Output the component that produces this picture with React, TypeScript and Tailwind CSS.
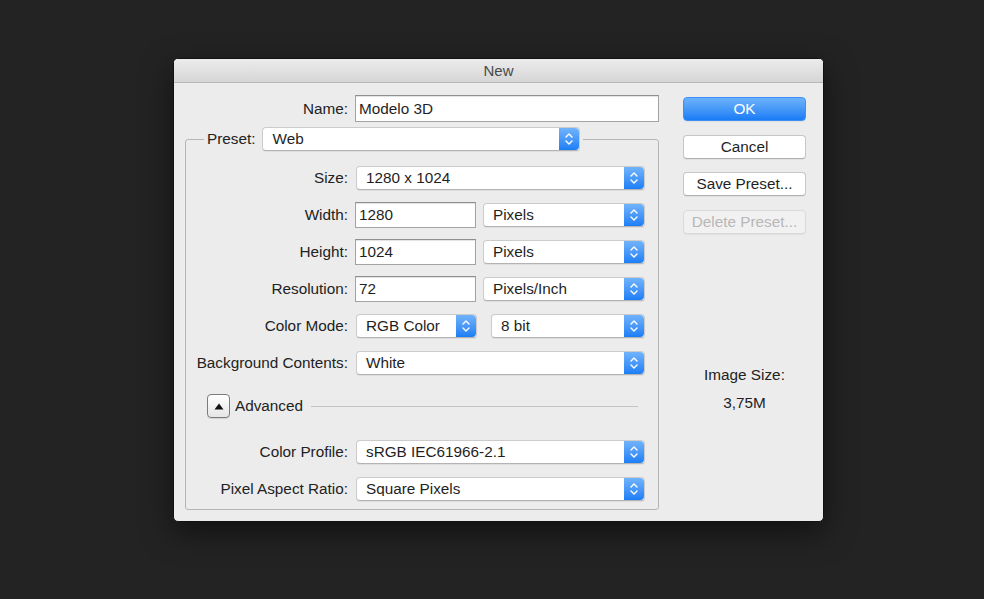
import React from "react";

const font = { fontFamily: '"Liberation Sans", Arial, sans-serif' };

function Stepper() {
  return (
    <div className="flex h-full w-[20px] flex-none flex-col items-center justify-center gap-[2px] rounded-r-[4px] bg-gradient-to-b from-[#70b3fa] to-[#1a7ef6]">
      <svg width="8" height="5" viewBox="0 0 8 5" fill="none">
        <path d="M1 4 L4 1 L7 4" stroke="white" strokeWidth="1.4" strokeLinecap="round" strokeLinejoin="round" />
      </svg>
      <svg width="8" height="5" viewBox="0 0 8 5" fill="none">
        <path d="M1 1 L4 4 L7 1" stroke="white" strokeWidth="1.4" strokeLinecap="round" strokeLinejoin="round" />
      </svg>
    </div>
  );
}

interface SelectProps {
  value: string;
  className?: string;
}

function Select({ value, className = "" }: SelectProps) {
  return (
    <div
      className={`flex h-[24px] items-center rounded-[4px] border border-[#cbcbcb] border-b-[#b3b3b3] bg-white shadow-[0_1px_0_rgba(0,0,0,0.06)] ${className}`}
    >
      <span className="flex-1 truncate pl-[9px] text-[15.3px] leading-none text-[#1f1f1f]">{value}</span>
      <Stepper />
    </div>
  );
}

interface InputProps {
  value: string;
  className?: string;
}

function TextInput({ value, className = "" }: InputProps) {
  return (
    <div
      className={`flex h-[26px] items-center border border-[#a3a3a3] border-t-[#8e8e8e] bg-white pl-[3px] shadow-[inset_0_1px_1px_rgba(0,0,0,0.12)] ${className}`}
    >
      <span className="text-[15.3px] leading-none text-[#1f1f1f]">{value}</span>
    </div>
  );
}

function Label({ text }: { text: string }) {
  return (
    <span className="w-[169px] flex-none pr-[7px] text-right text-[15.3px] leading-none text-[#222]">
      {text}
    </span>
  );
}

function Row({ children }: { children: React.ReactNode }) {
  return <div className="flex h-[37px] items-center">{children}</div>;
}

function Button({
  children,
  primary,
  disabled,
  className = "",
}: {
  children: React.ReactNode;
  primary?: boolean;
  disabled?: boolean;
  className?: string;
}) {
  let look = "border-[#c6c6c6] border-b-[#b0b0b0] bg-white text-[#1f1f1f]";
  if (primary) look = "border-[#3d8ff6] bg-gradient-to-b from-[#6bb2fa] to-[#177cf6] text-white";
  if (disabled) look = "border-[#dadada] bg-[#f1f1f1] text-[#b7b7b7]";
  return (
    <div
      className={`flex h-[24px] w-[123px] items-center justify-center rounded-[4px] border text-[15.3px] leading-none shadow-[0_1px_0_rgba(0,0,0,0.05)] ${look} ${className}`}
    >
      {children}
    </div>
  );
}

export default function App() {
  return (
    <div className="min-h-[599px] bg-[#232323] pl-[173px] pt-[58px]" style={font}>
      <div className="h-[464px] w-[651px] overflow-hidden rounded-[5px] border border-[#111] bg-[#ececec] shadow-[0_10px_30px_rgba(0,0,0,0.5)]">
        {/* title bar */}
        <div className="flex h-[24px] items-center justify-center border-b border-[#b8b8b8] bg-gradient-to-b from-[#ececec] to-[#d6d6d6]">
          <span className="text-[15px] leading-none text-[#4a4a4a]">New</span>
        </div>

        <div className="flex pl-[11px]">
          {/* form side */}
          <div className="w-[474px] pt-[12px]">
            <div className="flex h-[27px] items-center">
              <span className="w-[170px] flex-none pr-[7px] text-right text-[15.3px] leading-none text-[#222]">
                Name:
              </span>
              <TextInput value="Modelo 3D" className="h-[27px] w-[304px]" />
            </div>

            <fieldset className="mt-[5px] w-[474px] rounded-[3px] border border-[#b5b5b5] pb-[2px]">
              <legend className="ml-[18px] flex items-center px-[3px]">
                <span className="pr-[7px] text-[15.3px] leading-none text-[#222]">Preset:</span>
                <Select value="Web" className="w-[318px]" />
              </legend>

              <div className="pt-[8px]">
                <Row>
                  <Label text="Size:" />
                  <Select value="1280 x 1024" className="ml-[1px] w-[289px]" />
                </Row>
                <Row>
                  <Label text="Width:" />
                  <TextInput value="1280" className="w-[121px]" />
                  <Select value="Pixels" className="ml-[7px] w-[162px]" />
                </Row>
                <Row>
                  <Label text="Height:" />
                  <TextInput value="1024" className="w-[121px]" />
                  <Select value="Pixels" className="ml-[7px] w-[162px]" />
                </Row>
                <Row>
                  <Label text="Resolution:" />
                  <TextInput value="72" className="w-[121px]" />
                  <Select value="Pixels/Inch" className="ml-[7px] w-[162px]" />
                </Row>
                <Row>
                  <Label text="Color Mode:" />
                  <Select value="RGB Color" className="ml-[1px] w-[121px]" />
                  <Select value="8 bit" className="ml-[14px] w-[154px]" />
                </Row>
                <Row>
                  <Label text="Background Contents:" />
                  <Select value="White" className="ml-[1px] w-[289px]" />
                </Row>

                <div className="mt-[13px] flex h-[24px] items-center pl-[21px] pr-[20px]">
                  <div className="flex h-[24px] w-[23px] items-center justify-center rounded-[4px] border border-[#7c7c7c] bg-gradient-to-b from-white to-[#e6e6e6] shadow-[0_1px_0_rgba(0,0,0,0.1)]">
                    <svg width="10" height="7" viewBox="0 0 10 7">
                      <path d="M5 0.5 L9.5 6.5 L0.5 6.5 Z" fill="#111" />
                    </svg>
                  </div>
                  <span className="ml-[5px] text-[15.3px] leading-none text-[#222]">Advanced</span>
                  <div className="ml-[8px] h-px flex-1 bg-[#c4c4c4]" />
                </div>

                <div className="mt-[15px]">
                  <Row>
                    <Label text="Color Profile:" />
                    <Select value="sRGB IEC61966-2.1" className="ml-[1px] w-[289px]" />
                  </Row>
                  <Row>
                    <Label text="Pixel Aspect Ratio:" />
                    <Select value="Square Pixels" className="ml-[1px] w-[289px]" />
                  </Row>
                </div>
              </div>
            </fieldset>
          </div>

          {/* buttons side */}
          <div className="ml-[24px] flex w-[123px] flex-col items-center pt-[14px]">
            <Button primary>OK</Button>
            <Button className="mt-[14px]">Cancel</Button>
            <Button className="mt-[13px]">Save Preset...</Button>
            <Button disabled className="mt-[14px]">
              Delete Preset...
            </Button>
            <span className="mt-[131px] text-[15.3px] leading-[20px] text-[#222]">Image Size:</span>
            <span className="mt-[8px] text-[15.3px] leading-[20px] text-[#222]">3,75M</span>
          </div>
        </div>
      </div>
    </div>
  );
}
